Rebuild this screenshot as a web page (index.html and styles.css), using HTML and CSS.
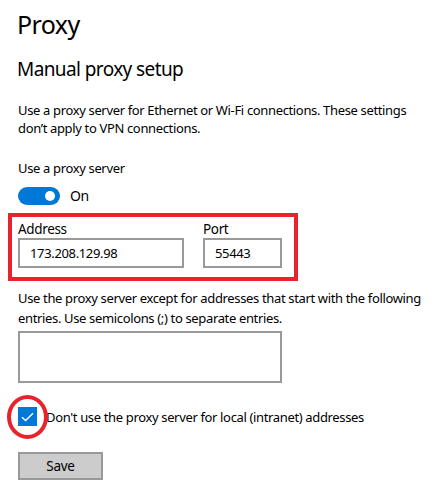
FILE: index.html
```html
<!DOCTYPE html>
<html lang="en">
<head>
    <meta charset="UTF-8">
    <meta name="viewport" content="width=device-width, initial-scale=1.0">
    <title>Proxy</title>
    <link rel="stylesheet" href="styles.css">
</head>
<body>

    <!-- Page Title -->
    <h1 class="page-title">Proxy</h1>
    <h2 class="section-title">Manual proxy setup</h2>

    <p class="desc intro">Use a proxy server for Ethernet or Wi-Fi connections. These settings don’t apply to VPN connections.</p>

    <!-- Toggle -->
    <div class="setting-label">Use a proxy server</div>
    <div class="toggle-row">
        <span class="toggle"><span class="knob"></span></span>
        <span class="toggle-text">On</span>
    </div>

    <!-- Address and Port -->
    <div class="highlight-box">
        <div class="field">
            <label>Address</label>
            <div class="input address">173.208.129.98</div>
        </div>
        <div class="field">
            <label>Port</label>
            <div class="input port">55443</div>
        </div>
    </div>

    <p class="desc except">Use the proxy server except for addresses that start with the following entries. Use semicolons (;) to separate entries.</p>
    <div class="textarea"></div>

    <!-- Local addresses checkbox -->
    <div class="check-row">
        <span class="checkbox">
            <svg width="13" height="10" viewBox="0 0 13 10">
                <path d="M1 5.2 L4.6 8.6 L12 1.2" fill="none" stroke="#fff" stroke-width="1.4"/>
            </svg>
        </span>
        <span class="check-text">Don't use the proxy server for local (intranet) addresses</span>
        <span class="ring"></span>
    </div>

    <button class="save-btn">Save</button>

</body>
</html>
```

FILE: styles.css
```css
/* General Styles */
body {
    margin: 0;
    padding: 0 0 0 18px;
    font-family: 'Noto Sans', 'Open Sans', sans-serif;
    color: #000;
    background: #fff;
    font-size: 13px;
    letter-spacing: -0.35px;
}

/* Titles */
.page-title {
    margin: 8px 0 0 -1px;
    font-size: 25px;
    line-height: 32px;
    font-weight: 400;
    letter-spacing: -0.6px;
}

.section-title {
    margin: 16px 0 0 -1px;
    font-size: 19px;
    line-height: 26px;
    font-weight: 400;
    letter-spacing: -0.6px;
}

.desc {
    margin: 19px 0 0 0;
    line-height: 18px;
}

.desc.intro {
    max-width: 396px;
}

/* Toggle */
.setting-label {
    margin-top: 22px;
    line-height: 18px;
}

.toggle-row {
    display: flex;
    align-items: center;
    margin-top: 9px;
}

.toggle {
    width: 42px;
    height: 18px;
    border-radius: 9px;
    background: #0078d7;
    position: relative;
}

.toggle .knob {
    position: absolute;
    right: 5px;
    top: 4px;
    width: 10px;
    height: 10px;
    border-radius: 50%;
    background: #fff;
}

.toggle-text {
    margin-left: 10px;
    font-size: 14px;
}

/* Address / Port */
.highlight-box {
    display: flex;
    gap: 19px;
    width: 271px;
    margin: 8px 0 0 -10px;
    padding: 4px 5px 9px 6px;
    border: 4px solid #e8232b;
}

.field label {
    display: block;
    line-height: 17px;
    font-size: 13.5px;
}

.input {
    box-sizing: border-box;
    height: 30px;
    border: 2px solid #999;
    padding: 0 10px;
    line-height: 26px;
}

.input.address {
    width: 166px;
}

.input.port {
    width: 79px;
}

/* Exceptions */
.desc.except {
    margin-top: 7px;
    line-height: 20px;
}

.textarea {
    box-sizing: border-box;
    width: 264px;
    height: 52px;
    border: 2px solid #999;
    margin-top: 3px;
}

/* Checkbox */
.check-row {
    position: relative;
    display: flex;
    align-items: center;
    margin-top: 24px;
}

.checkbox {
    width: 19px;
    height: 19px;
    background: #0078d7;
    display: flex;
    align-items: center;
    justify-content: center;
}

.check-text {
    margin-left: 9px;
}

.ring {
    position: absolute;
    left: -11px;
    top: -12px;
    width: 33px;
    height: 36px;
    border: 4px solid #e8232b;
    border-radius: 50%;
}

/* Save button */
.save-btn {
    display: block;
    margin-top: 26px;
    width: 85px;
    height: 28px;
    background: #ccc;
    border: 2px solid #999;
    font-family: inherit;
    font-size: 13.5px;
    letter-spacing: -0.3px;
    color: #000;
    padding: 0;
}
```
